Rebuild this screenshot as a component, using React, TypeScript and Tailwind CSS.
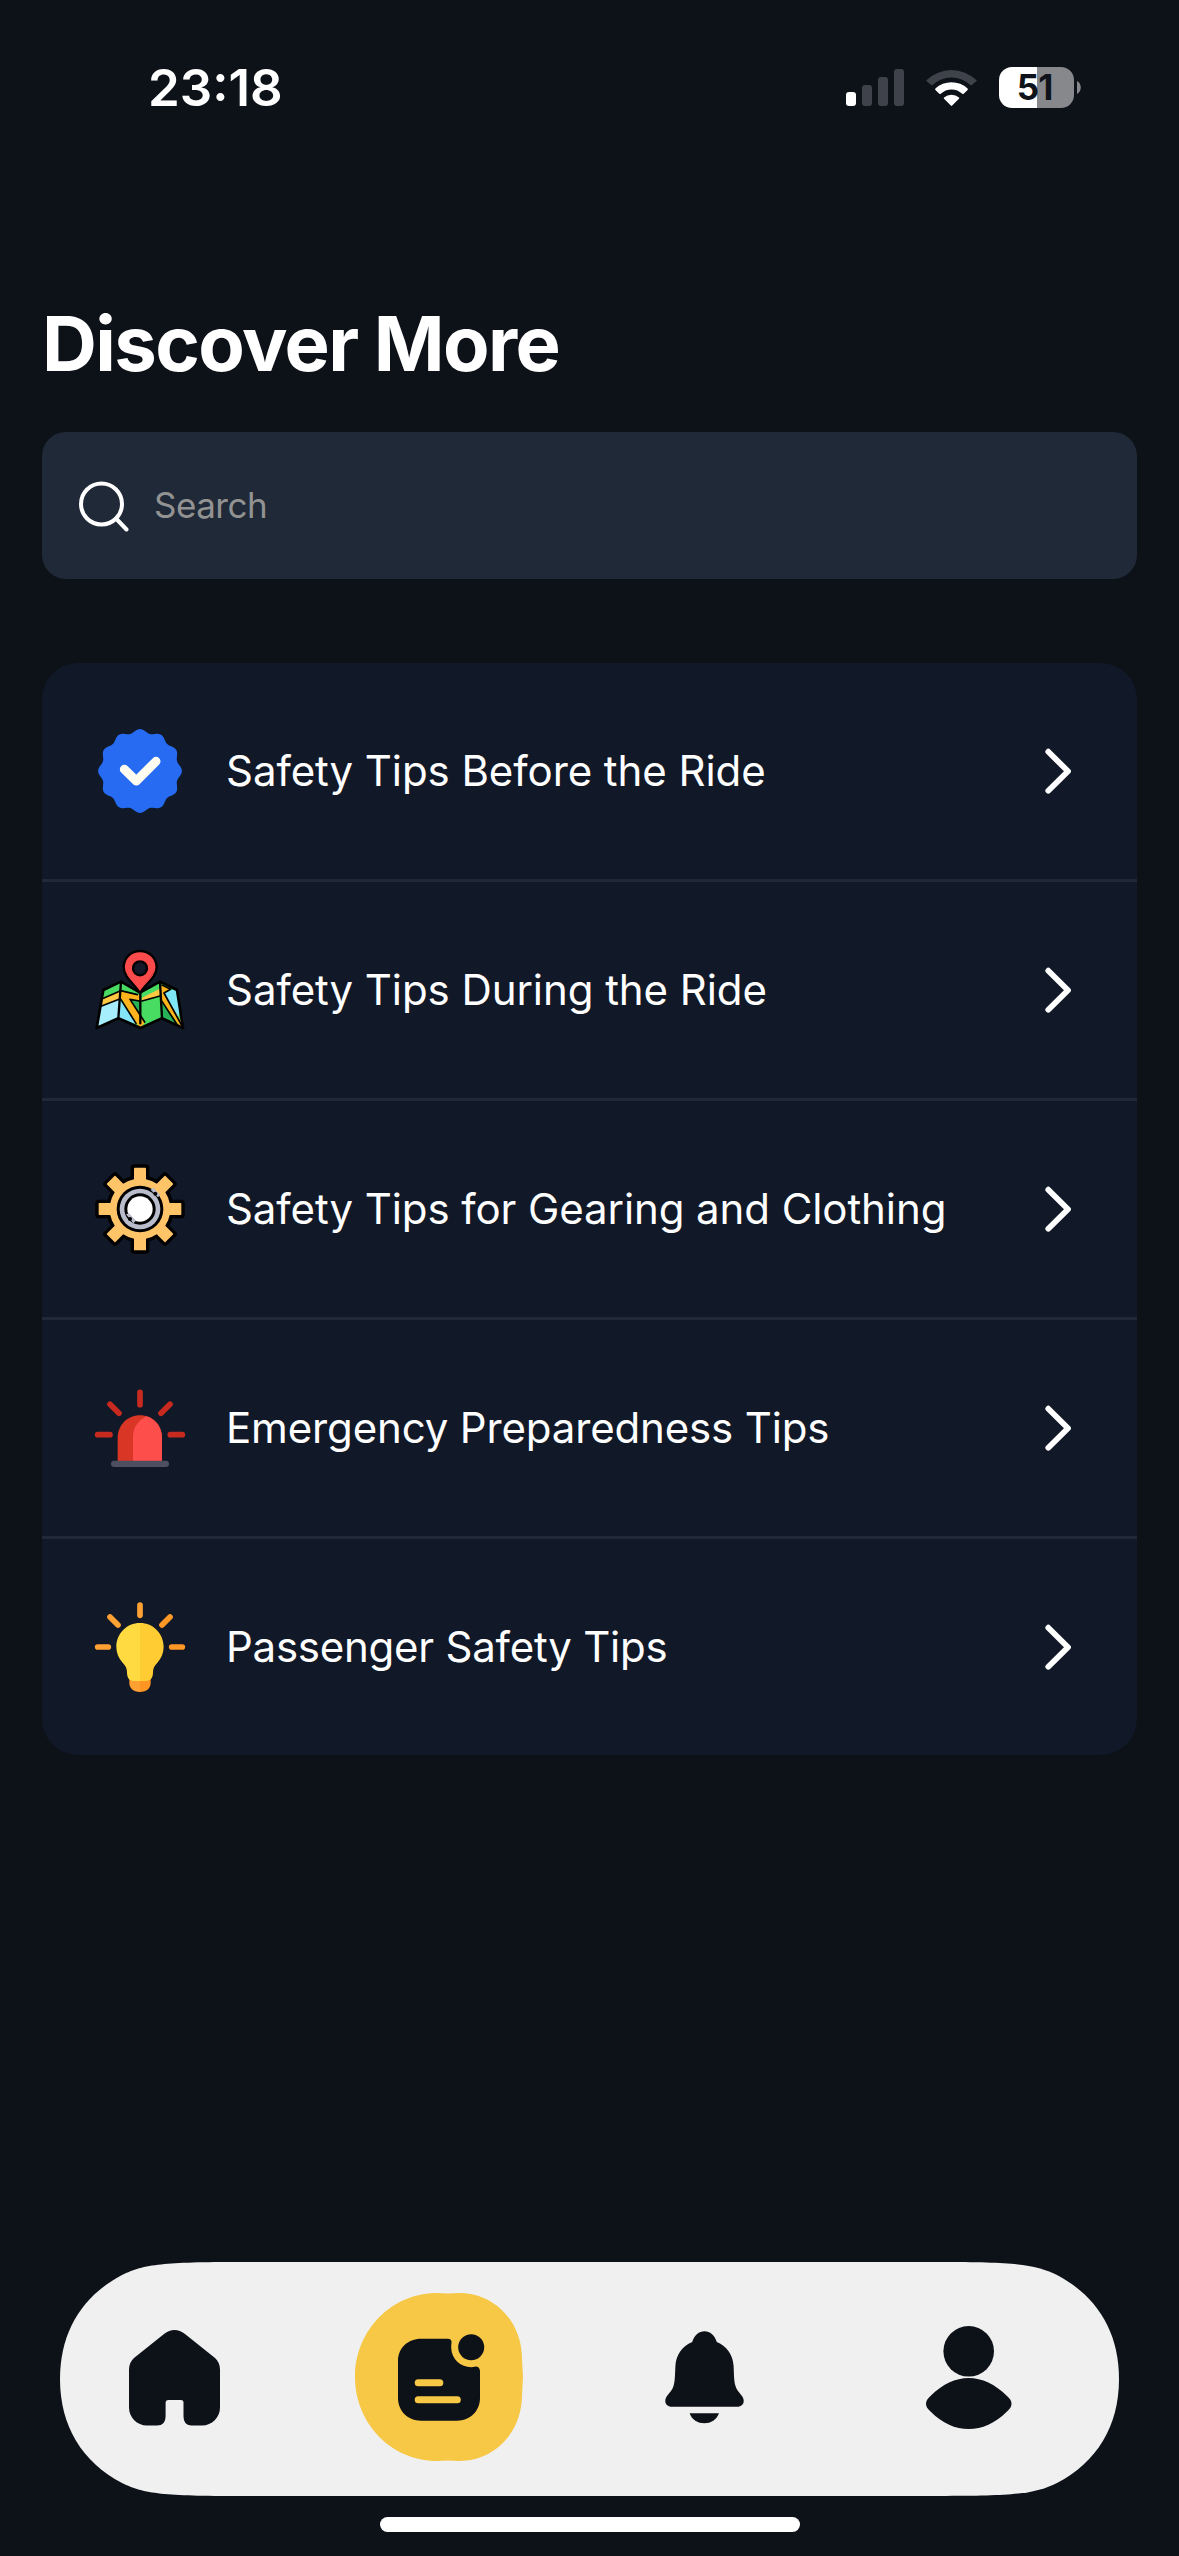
import type { ReactNode } from "react";

const scallop =
  "M" +
  Array.from({ length: 240 }, (_, i) => {
    const a = (i / 240) * Math.PI * 2;
    const r = 120.3 + 5.4 * Math.cos(12 * a);
    return `${(180 + r * Math.cos(a)).toFixed(2)} ${(183 + r * Math.sin(a)).toFixed(2)}`;
  }).join("L") +
  "Z";

function BadgeIcon() {
  return (
    <svg className="size-[90px] overflow-visible" viewBox="45 48 270 270" fill="none">
      <path d={scallop} fill="#266bf2" />
      <path d="M133 178L169 213L228 154" stroke="#fffdf0" strokeWidth="27" strokeLinecap="round" strokeLinejoin="round" />
    </svg>
  );
}

function MapIcon() {
  return (
    <svg className="size-[90px] overflow-visible" viewBox="45 45 270 270" fill="none">
      <path d="M70 180L123 155L180 188L240 155L291 180L309 294L246 265L182 294L115 265L50 294Z" fill="#49dc62" />
      <path d="M63 228L121 206L115 265L52 293Z" fill="#a6eefb" />
      <path d="M121 206L168 282L115 265Z" fill="#83e3f7" />
      <path d="M250 190L271 180H291L300 240L295 262Z" fill="#7fe6f8" />
      <path d="M67 206L122 182V206L63 229Z" fill="#ffc843" />
      <path d="M123 184L180 196V214L150 208L194 278L182 294L168 278L123 204Z" fill="#ffb41e" />
      <path d="M186 203L240 176V198L186 213Z" fill="#ffc843" />
      <path d="M243 165L272 178L252 189L309 284V294L296 286L243 208Z" fill="#ffb41e" />
      <path d="M246 214L290 284L246 264Z" fill="#27b258" />
      <path d="M150 208L180 214V256Z" fill="#27b258" />
      <g stroke="#000" strokeWidth="8" strokeLinejoin="round" strokeLinecap="round">
        <path d="M70 180L123 155L180 188L240 155L291 180L309 294L246 265L182 294L115 265L50 294Z" />
        <path strokeWidth="7" d="M123 155L115 265M240 155L246 265M181 190V280" />
        <path strokeWidth="5" d="M67 206L122 182L172 194M63 229L121 206L168 280M150 208L178 213M150 208L194 276M186 213L240 198M246 165L272 178L252 189L304 284M246 214L290 282" />
      </g>
      <path d="M180 190C167 164 131 143 131 112C131 83 153 63 180 63S230 83 230 112C230 143 193 164 180 190Z" fill="#fd4b4b" stroke="#000" strokeWidth="7" strokeLinejoin="round" />
      <path d="M204 73C240 98 220 136 194 162C228 136 234 100 204 73Z" fill="#dc3b41" />
      <circle cx="180" cy="115" r="21" fill="#121827" stroke="#000" strokeWidth="7" />
    </svg>
  );
}

const teeth = [0, 45, 90, 135, 180, 225, 270, 315];

function GearIcon() {
  return (
    <svg className="size-[90px] overflow-visible" viewBox="45 42 270 270">
      <g fill="#000" stroke="#000" strokeWidth="20" strokeLinejoin="round">
        <circle cx="180" cy="177" r="91" />
        {teeth.map((a) => (
          <rect key={a} x="162" y="53" width="36" height="60" transform={`rotate(${a} 180 177)`} />
        ))}
      </g>
      <g fill="#ffc368">
        <circle cx="180" cy="177" r="91" />
        {teeth.map((a) => (
          <rect key={a} x="162" y="53" width="36" height="60" rx="2" transform={`rotate(${a} 180 177)`} />
        ))}
      </g>
      <circle cx="180" cy="177" r="70" fill="#000" />
      <circle cx="180" cy="177" r="61" fill="#b9bccb" />
      <circle cx="180" cy="177" r="47" fill="#000" />
      <circle cx="180" cy="177" r="38" fill="#fff" />
      <path d="M212 119L220 113L241 135L234 142Z" fill="#b9bccb" />
      <path d="M138 193L147 190L168 212L160 220Z" fill="#b9bccb" />
      <circle cx="226" cy="131" r="6" fill="#000" />
      <circle cx="150" cy="207" r="6" fill="#000" />
    </svg>
  );
}

function SirenIcon() {
  return (
    <svg className="size-[90px] overflow-visible" viewBox="45 39 270 270" fill="none">
      <path d="M113 276V203C113 166 142 136 180 136S246 166 246 203V276Z" fill="#d93625" />
      <path d="M159 276V200C159 172 175 151 200 139C228 148 246 173 246 203V276Z" fill="#fd4e4b" />
      <rect x="93" y="272" width="174" height="19" rx="9.5" fill="#4d4f60" />
      <path d="M180 67V104M90 103L117 130M270 103L243 130M53 194H90M271 194H307" stroke="#c92a20" strokeWidth="17" strokeLinecap="round" />
    </svg>
  );
}

function BulbIcon() {
  return (
    <svg className="size-[90px] overflow-visible" viewBox="45 36 270 270" fill="none">
      <path d="M148 265H180V306C160 306 148 294 148 279Z" fill="#ffa033" />
      <path d="M212 265H180V306C200 306 212 294 212 279Z" fill="#ff9522" />
      <path d="M180 99C140 99 109 131 109 170C109 189 116 205 128 218C138 229 141 236 141 247C141 264 148 273 162 273H180Z" fill="#ffdb41" />
      <path d="M180 99C220 99 251 131 251 170C251 189 244 205 232 218C222 229 219 236 219 247C219 264 212 273 198 273H180Z" fill="#ffcc33" />
      <path d="M180 45V76M90 81L114 105M53 171H85" stroke="#ffa133" strokeWidth="17" strokeLinecap="round" />
      <path d="M270 81L246 105M275 171H307" stroke="#ff9824" strokeWidth="17" strokeLinecap="round" />
    </svg>
  );
}

function StatusBar() {
  return (
    <div className="flex h-[175px] items-start justify-between pr-[98px] pl-[148px]">
      <div className="mt-[57px] text-[51px] leading-[62px] font-semibold tracking-[0px]">23:18</div>
      <div className="mt-[67px] flex">
        <svg className="h-[41px] w-[58px]" viewBox="0 0 58 41">
          <rect x="0" y="25" width="10" height="14" rx="3" fill="#fff" />
          <rect x="16" y="18" width="10" height="21" rx="3" fill="#3f424a" />
          <rect x="32" y="10" width="10" height="29" rx="3" fill="#3f424a" />
          <rect x="48" y="2" width="10" height="37" rx="3" fill="#3f424a" />
        </svg>
        <svg className="ml-[22px] h-[41px] w-[51px]" viewBox="0 0 51 41">
          <path d="M.7 13A36 36 0 0 1 50.3 13Q51 13.600 50.300 14.300L45.800 18Q45.100 18.600 44.400 18A27.500 27.500 0 0 0 6.600 18Q5.900 18.600 5.200 18L.7 14.300Q0 13.600 .7 13Z" fill="#3f424a" />
          <path d="M9.400 21.600A23.500 23.500 0 0 1 41.600 21.600Q42.200 22.300 41.600 22.900L37.700 26.800Q37 27.400 36.200 26.800A15.500 15.500 0 0 0 14.800 26.800Q14 27.400 13.300 26.800L9.400 22.900Q8.800 22.300 9.400 21.600Z" fill="#fff" />
          <path d="M18 30.500A11.500 11.500 0 0 1 33 30.500Q33.500 31.200 33 31.800L26.200 38.600Q25.500 39.300 24.800 38.600L18 31.800Q17.500 31.200 18 30.500Z" fill="#fff" />
        </svg>
        <div className="ml-[22px] flex h-[41px] w-[75px] items-center justify-center rounded-[13px] bg-[linear-gradient(90deg,#fff_38px,#87888c_38px)] pr-[4px] text-[35px] leading-[41px] font-bold tracking-[-1px] text-[#0e131b]">
          51
        </div>
        <svg className="mt-[14px] ml-[3px] h-[13px] w-[4px]" viewBox="0 0 4 13">
          <path d="M0 0C5 2.500 5 10.500 0 13Z" fill="#87888c" />
        </svg>
      </div>
    </div>
  );
}

const tips: { label: string; icon: ReactNode; tracking: string }[] = [
  { label: "Safety Tips Before the Ride", icon: <BadgeIcon />, tracking: "tracking-[-0.07px]" },
  { label: "Safety Tips During the Ride", icon: <MapIcon />, tracking: "tracking-[-0.07px]" },
  { label: "Safety Tips for Gearing and Clothing", icon: <GearIcon />, tracking: "tracking-[-0.09px]" },
  { label: "Emergency Preparedness Tips", icon: <SirenIcon />, tracking: "tracking-[-0.15px]" },
  { label: "Passenger Safety Tips", icon: <BulbIcon />, tracking: "tracking-[-0.24px]" },
];

function TipRow({ label, icon, tracking }: { label: string; icon: ReactNode; tracking: string }) {
  return (
    <li className="flex h-[219px] items-center border-b-[3px] border-[#1f2937] pr-[64px] pl-[53px] last:h-[216px] last:border-b-0">
      {icon}
      <span className={`ml-[41px] flex-1 text-[42px] leading-[60px] whitespace-nowrap ${tracking}`}>{label}</span>
      <svg className="h-[46px] w-[28px]" viewBox="0 0 28 46" fill="none">
        <path d="M3.300 3.700L23 23.300L3.300 42.700" stroke="#fff" strokeWidth="5.800" strokeLinecap="round" strokeLinejoin="round" />
      </svg>
    </li>
  );
}

function TabBar() {
  return (
    <nav className="mx-[60px] flex h-[234px] items-start bg-[#f0f0f0] [clip-path:path('M0_117C0_70_22_34_62_13C84_2_105_0_180_0H879C954_0_975_2_997_13C1037_34_1059_70_1059_117S1037_200_997_221C975_232_954_234_879_234H180C105_234_84_232_62_221C22_200_0_164_0_117Z')]">
      <svg className="mt-[67px] ml-[69px] h-[97px] w-[91px]" viewBox="0 -.5 91 97" fill="#0d1118">
        <path d="M0 40Q0 33 5 28.500L35 4.500Q45.500 -3.500 56 4.500L86 28.500Q91 33 91 40V78C91 88 83 96 73 96H62Q54.500 95.500 54.500 87V73Q54.500 70.500 52 70.500H39Q36.600 70.500 36.600 73V87Q36.600 96 28 96H18C8 96 0 88 0 78Z" />
      </svg>
      <div className="mt-[31px] ml-[135px] h-[168px] w-[168px] bg-[#f7c846] pt-[41px] pl-[43px] [clip-path:path('M0_84C0_38_36_0_82_0L93_.5L104_0C139_0_167_28_167_66L168_84L167_102C167_140_139_168_104_168L93_167.5L82_168C36_168_0_130_0_84Z')]">
        <svg className="h-[88px] w-[88px]" viewBox="0 0 88 88" fill="#0d1118">
          <path d="M23 4.700H49.500Q54 4.700 53.500 9Q53 11 53.200 14A20 20 0 0 0 73.200 33.300Q75 33.300 77.500 32.600Q81.500 32.600 82 37V64C82 77 72 86.700 59 86.700H23C10 86.700 0 77 0 64V27C0 14 10 4.700 23 4.700Z" />
          <circle cx="73.200" cy="13.300" r="13" />
          <rect x="16.700" y="45.300" width="28.600" height="7" rx="3.500" fill="#f7c846" />
          <rect x="16.700" y="62.300" width="46.100" height="7" rx="3.500" fill="#f7c846" />
        </svg>
      </div>
      <svg className="mt-[69px] ml-[142px] h-[93px] w-[79px]" viewBox="0 0 79 93" fill="#0d1118">
        <path d="M39.500 .3C45 .3 49.500 4 51.800 11C62 15 68 24 68.600 35C69 42 68.800 50 70.500 55C72 60 75 62 77 65C80.500 70 78.500 75.700 72 75.700H7C.5 75.700 -1.500 70 2 65C4 62 7 60 8.500 55C10.200 50 10 42 10.400 35C11 24 17 15 27.200 11C29.500 4 34 .3 39.500 .3Z" />
        <path d="M24.600 82.300H54C51.500 89 46 92.300 39.300 92.300S27 89 24.600 82.300Z" />
      </svg>
      <svg className="mt-[64px] ml-[181px] h-[104px] w-[88px]" viewBox="0 0 88 104" fill="#0d1118">
        <circle cx="43.700" cy="25.300" r="25.300" />
        <path d="M43.700 52C57 52 70 58 82 70Q91 77.700 82 85.500C70 97.500 57 103 43.700 103S17.500 97.500 5.500 85.500Q-3.500 77.700 5.500 70C17.500 58 30.500 52 43.700 52Z" />
      </svg>
    </nav>
  );
}

export default function App() {
  return (
    <div className="flex h-[2556px] w-[1179px] flex-col bg-[#0d1118] font-['Inter',sans-serif] text-white">
      <StatusBar />
      <main className="flex flex-1 flex-col px-[42px] pt-[118px]">
        <h1 className="text-[76px] leading-[100px] font-bold tracking-[-1.620px] whitespace-nowrap">Discover More</h1>
        <div className="mt-[39px] flex h-[147px] items-center rounded-[24px] bg-[#1f2937] pl-[36px]">
          <svg className="h-[52px] w-[52px]" viewBox="0 0 52 52" fill="none" stroke="#fff">
            <circle cx="23.500" cy="24" r="20.500" strokeWidth="4" />
            <path d="M38 38.500L48.500 49.500" strokeWidth="4" strokeLinecap="round" />
          </svg>
          <span className="-mt-px ml-[24px] text-[35px] leading-[48px] tracking-[-0.500px] text-[#929292]">Search</span>
        </div>
        <ul className="mt-[84px] flex flex-col rounded-[36px] bg-[#111827]">
          {tips.map((tip) => (
            <TipRow key={tip.label} {...tip} />
          ))}
        </ul>
      </main>
      <TabBar />
      <div className="mt-[21px] mb-[24px] h-[15px] w-[420px] self-center rounded-full bg-white" />
    </div>
  );
}
